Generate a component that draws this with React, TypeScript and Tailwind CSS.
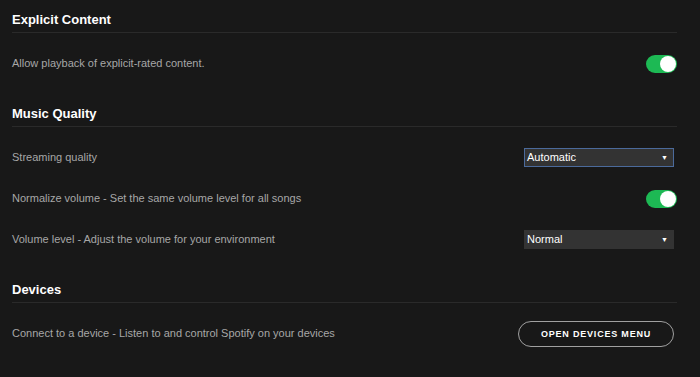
import React from 'react';

const Toggle = () => (
  <div className="w-[31px] h-[18px] rounded-full bg-[#1db954] flex items-center justify-end pr-[1px]">
    <div className="w-[16px] h-[16px] rounded-full bg-white" />
  </div>
);

const Select = ({ value, focused }: { value: string; focused?: boolean }) => (
  <div
    className={
      focused
        ? 'w-[150px] h-[19px] bg-[#333333] border border-[#4b6a9b] flex items-center justify-between pl-[2px] pr-[5px] text-[11px] text-white'
        : 'w-[150px] h-[19px] bg-[#333333] border border-[#333333] flex items-center justify-between pl-[2px] pr-[5px] text-[11px] text-white'
    }
  >
    <span>{value}</span>
    <span className="text-[7px] leading-none">▼</span>
  </div>
);

const Heading = ({ title }: { title: string }) => (
  <div className="pt-[10px] pb-[2px] mb-[10px] border-b border-[#2a2a2a]">
    <h2 className="text-[13px] leading-[20px] font-bold text-white">{title}</h2>
  </div>
);

const Row = ({ label, children }: { label: string; children: React.ReactNode }) => (
  <div className="h-[41px] flex items-center justify-between">
    <span className="text-[11px] text-[#a7a7a7]">{label}</span>
    {children}
  </div>
);

export default function App() {
  return (
    <div
      className="w-[700px] h-[377px] bg-[#181818] pl-3 pr-[23px] overflow-hidden"
      style={{ fontFamily: '"Liberation Sans", Arial, sans-serif' }}
    >
      {/* Explicit Content */}
      <section>
        <Heading title="Explicit Content" />
        <Row label="Allow playback of explicit-rated content.">
          <Toggle />
        </Row>
      </section>

      {/* Music Quality */}
      <section className="mt-[10px]">
        <Heading title="Music Quality" />
        <Row label="Streaming quality">
          <div className="pr-[3px]">
            <Select value="Automatic" focused />
          </div>
        </Row>
        <Row label="Normalize volume - Set the same volume level for all songs">
          <Toggle />
        </Row>
        <Row label="Volume level - Adjust the volume for your environment">
          <div className="pr-[3px]">
            <Select value="Normal" />
          </div>
        </Row>
      </section>

      {/* Devices */}
      <section className="mt-[10px]">
        <Heading title="Devices" />
        <Row label="Connect to a device - Listen to and control Spotify on your devices">
          <div className="pr-[3px]">
            <button className="w-[156px] h-[26px] rounded-full border border-[#a0a0a0] text-white text-[9px] font-bold tracking-[0.8px]">
              OPEN DEVICES MENU
            </button>
          </div>
        </Row>
      </section>
    </div>
  );
}
